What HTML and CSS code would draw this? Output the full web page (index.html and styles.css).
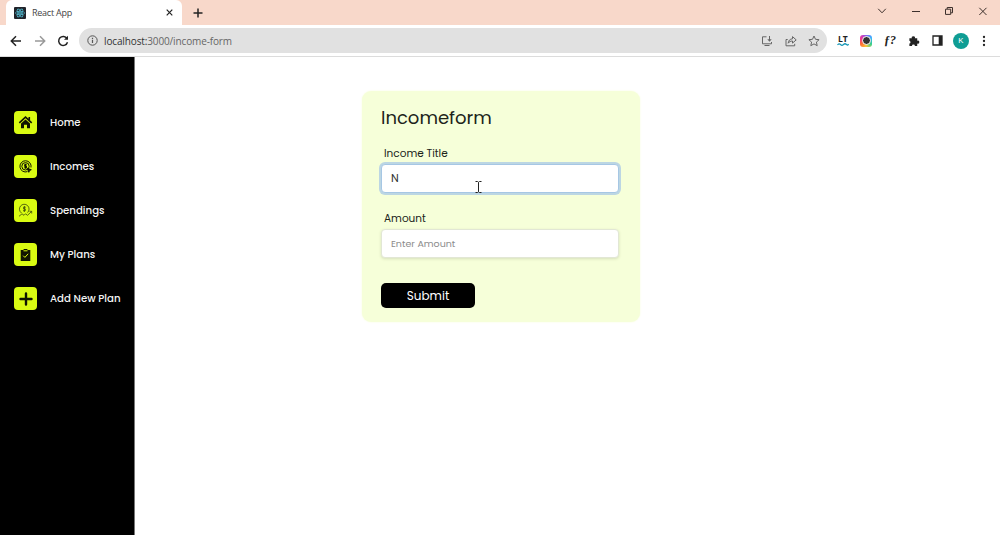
FILE: index.html
```html
<!DOCTYPE html>
<html lang="en">
<head>
  <meta charset="UTF-8">
  <title>React App</title>
  <link rel="stylesheet" href="styles.css">
</head>
<body>
  <div class="tabstrip">
    <div class="tab">
      <svg class="favicon" width="12" height="12" viewBox="0 0 12 12">
        <rect width="12" height="12" rx="1" fill="#20232a"/>
        <g fill="none" stroke="#4fb3c8" stroke-width=".8">
          <ellipse cx="6" cy="6" rx="4.6" ry="1.8"/>
          <ellipse cx="6" cy="6" rx="4.6" ry="1.8" transform="rotate(60 6 6)"/>
          <ellipse cx="6" cy="6" rx="4.6" ry="1.8" transform="rotate(120 6 6)"/>
        </g>
        <circle cx="6" cy="6" r=".9" fill="#4fb3c8"/>
      </svg>
      <span class="tab-title">React App</span>
      <svg width="7" height="7" viewBox="0 0 7 7" stroke="#222" stroke-width="1.2"><path d="M.7.7l5.6 5.6M6.3.7L.7 6.3"/></svg>
    </div>
    <svg class="new-tab" width="10" height="10" viewBox="0 0 10 10" stroke="#222" stroke-width="1.5"><path d="M5 .5v9M.5 5h9"/></svg>
    <div class="window-buttons">
      <svg width="10" height="10" viewBox="0 0 10 10"><path d="M1.2 2.8L5 6.8l3.8-4"/></svg>
      <svg width="10" height="10" viewBox="0 0 10 10"><path d="M1 5.5h8"/></svg>
      <svg width="10" height="10" viewBox="0 0 10 10"><path d="M1.5 3.2h5.2v5.2H1.5zM3.2 3V1.5h5.3v5.3H7"/></svg>
      <svg width="10" height="10" viewBox="0 0 10 10"><path d="M1.3 1.8l7.2 7.2M8.5 1.8L1.3 9"/></svg>
    </div>
  </div>

  <div class="toolbar">
    <div class="nav-buttons">
      <svg width="12" height="12" viewBox="0 0 12 12" stroke="#222"><path d="M11 6H1.5M6 1.3L1.3 6 6 10.7"/></svg>
      <svg width="12" height="12" viewBox="0 0 12 12" stroke="#999"><path d="M1 6h9.5M6 1.3L10.7 6 6 10.7"/></svg>
      <svg width="12" height="12" viewBox="0 0 12 12" stroke="#222"><path d="M10 3.5A4.5 4.5 0 1 0 10.5 7.2"/><path d="M11 .8v4H7z" fill="#222" stroke="none"/></svg>
    </div>
    <div class="address">
      <svg width="11" height="11" viewBox="0 0 11 11" fill="none" stroke="#555"><circle cx="5.5" cy="5.5" r="4.7"/><path d="M5.5 4.8v3.3M5.5 2.7v1.2" stroke-width="1.2"/></svg>
      <span class="url"><span class="host">localhost:</span>3000/income-form</span>
      <div class="address-actions">
        <svg width="12" height="12" viewBox="0 0 12 12"><path d="M5.5 1.8H1.5v7h9V7M3.5 10.5h5M8.5 1v4.5"/><path d="M6.3 4.3h4.4L8.5 6.8z" fill="#666" stroke="none"/></svg>
        <svg width="12" height="12" viewBox="0 0 12 12"><path d="M2.700 4.500H1v6.300h8.700V8.800M3.200 8.200C3.500 5.300 5 4 7.500 3.800V1.600l3.700 3.300-3.700 3.200V6C5.500 6 4.200 6.700 3.200 8.200z"/></svg>
        <svg width="12" height="12" viewBox="0 0 12 12"><path d="M6 1l1.500 3.300 3.600.4-2.700 2.400.8 3.600L6 8.900l-3.200 1.800.8-3.600L.9 4.700l3.600-.4z"/></svg>
      </div>
    </div>
    <div class="extensions">
      <div class="ext"><span class="ext-lt">LT<svg width="12" height="3" viewBox="0 0 12 3"><path d="M.5 2Q2 0 3.500 1.500T6.500 1.500T9.500 1.500T11.500 1" fill="none" stroke="#1696b5" stroke-width="1.200"/></svg></span></div>
      <div class="ext"><span class="ext-color"><i></i></span></div>
      <div class="ext"><span class="ext-font">ƒ?</span></div>
      <div class="ext"><svg width="12" height="12" viewBox="0 0 13 13" fill="#222"><path d="M1.500 3.500h2.700a1.700 1.700 0 1 1 3.200 0H10v2.600a1.700 1.700 0 1 1 0 3.200V12H7.500a1.600 1.600 0 0 0-3.200 0H1.500V9.300a1.600 1.600 0 0 0 0-3.100z"/></svg></div>
      <div class="ext"><svg width="11" height="11" viewBox="0 0 11 11"><path d="M1 1h9v9H1z" fill="none" stroke="#222" stroke-width="1.300"/><path d="M6.700 1H10v9H6.700z" fill="#222"/></svg></div>
      <div class="ext"><span class="avatar">K</span></div>
      <div class="ext"><svg width="4" height="12" viewBox="0 0 4 12" fill="#222"><circle cx="2" cy="2" r="1.150"/><circle cx="2" cy="6" r="1.150"/><circle cx="2" cy="10" r="1.150"/></svg></div>
    </div>
  </div>

  <div class="page">
    <nav class="sidebar">
      <a class="side-link">
        <span class="side-icon"><svg width="15" height="15" viewBox="0 0 15 15"><path d="M1.300 7.800l6.200-5.600 6.200 5.600M11.300 2v3" fill="none" stroke="#101500" stroke-width="1.600"/><path d="M3 8.600l4.500-4L12 8.600V13.300H9V9.800H6v3.500H3z" fill="#101500"/></svg></span>
        <span>Home</span>
      </a>
      <a class="side-link">
        <span class="side-icon"><svg width="15" height="15" viewBox="0 0 15 15" fill="none" stroke="#101500"><path d="M9.500 12.600A5.600 5.600 0 1 1 13 8.500"/><circle cx="7.500" cy="7.300" r="3.700"/><path d="M8.800 5.800H6.700v1.400h1.700v1.600H6.200M7.500 4.800v5" stroke-width="1.100"/><path d="M9.300 9.300l4 1.400-1.700.8-.8 1.800z" fill="#101500"/></svg></span>
        <span>Incomes</span>
      </a>
      <a class="side-link">
        <span class="side-icon"><svg width="15" height="15" viewBox="0 0 15 15" fill="none" stroke="#39470a" stroke-width=".8"><path d="M3.500 10A4.800 4.800 0 1 1 9.500 9.600"/><path d="M7.800 4.200H5.600v1.700h1.700v1.800H5M6.400 3v6"/><path d="M1 13.300l3-2.500 2 1.500 1.500-1.500 2 1.500L13.500 8.500M11.500 8.300h2.200v2.200"/></svg></span>
        <span>Spendings</span>
      </a>
      <a class="side-link">
        <span class="side-icon"><svg width="13" height="14" viewBox="0 0 13 14"><path d="M1.700 2h2.500l.8-1h3l.8 1h2.500v11H1.700z" fill="#101500"/><path d="M4.500 2.800h4M4.200 7.700l1.700 1.700 3.200-3.600" fill="none" stroke="#d9fb12" stroke-width="1"/></svg></span>
        <span>My Plans</span>
      </a>
      <a class="side-link">
        <span class="side-icon"><svg width="14" height="14" viewBox="0 0 14 14"><path d="M7 1.500v11M1.500 7h11" stroke="#101500" stroke-width="2.400" stroke-linecap="round"/></svg></span>
        <span>Add New Plan</span>
      </a>
    </nav>

    <main class="content">
      <form class="income-form">
        <h2>Incomeform</h2>
        <label for="title">Income Title</label>
        <input class="field focused" id="title" type="text" value="N">
        <label class="amount-label" for="amount">Amount</label>
        <input class="field" id="amount" type="text" placeholder="Enter Amount">
        <button class="submit" type="button">Submit</button>
      </form>
      <svg class="cursor" width="7" height="12" viewBox="0 0 7 12"><path d="M.5.5h2l1 .8 1-.8h2M3.500 1.300v9.400M.5 11.500h2l1-.8 1 .8h2" fill="none" stroke="#222"/></svg>
    </main>
  </div>
</body>
</html>
```

FILE: styles.css
```css
* { box-sizing: border-box; }
body {
  margin: 0;
  height: 535px;
  overflow: hidden;
  display: flex;
  flex-direction: column;
  font-family: Poppins, Inter, sans-serif;
  background: #fff;
}
svg { display: block; flex: none; }

/* browser bar */
.tabstrip {
  display: flex;
  align-items: center;
  height: 25px;
  padding-left: 6px;
  background: #f8d8ca;
}
.tab {
  display: flex;
  align-items: center;
  width: 176px;
  height: 25px;
  padding: 0 9px 0 8px;
  background: #fff;
  border-radius: 6px 6px 0 0;
}
.tab-title {
  flex: 1;
  margin-left: 6px;
  font: 9px "Open Sans", sans-serif;
  letter-spacing: -.25px;
  color: #444;
}
.new-tab { margin-left: 11px; }
.window-buttons {
  display: flex;
  gap: 23.7px;
  margin-left: auto;
  margin-right: 12px;
  margin-bottom: 4px;
  fill: none;
  stroke: #3d302c;
}
.toolbar {
  display: flex;
  align-items: center;
  height: 32px;
  padding: 0 4px 0 10px;
  border-bottom: 1px solid #dcdcdc;
}
.nav-buttons {
  display: flex;
  gap: 11.5px;
  fill: none;
  stroke-width: 1.5;
}
.address {
  display: flex;
  align-items: center;
  width: 748px;
  height: 25px;
  margin-left: 10px;
  padding: 0 7px 0 8px;
  background: #e1e1e1;
  border-radius: 13px;
}
.url {
  margin-left: 6px;
  font: 10px "Open Sans", sans-serif;
  letter-spacing: -.13px;
  color: #666;
}
.host { color: #333; }
.address-actions {
  display: flex;
  gap: 11.5px;
  margin-left: auto;
  fill: none;
  stroke: #666;
}
.extensions {
  display: flex;
  flex: 1;
  margin-left: 4px;
}
.ext {
  display: flex;
  flex: 1 1 0;
  align-items: center;
  justify-content: center;
  height: 18px;
  min-width: 0;
}
.ext-lt {
  width: 12px;
  font: bold 8.5px/8px "Open Sans", sans-serif;
  text-align: center;
  color: #222;
}
.ext-color {
  display: flex;
  align-items: center;
  justify-content: center;
  width: 12px;
  height: 12px;
  border-radius: 3px;
  background: conic-gradient(#8a5cf0, #38b6ff, #35cf8a, #ffc738, #ff6b35, #f0359a, #8a5cf0);
}
.ext-color i {
  width: 9px;
  height: 9px;
  border: 1px solid #fff;
  border-radius: 50%;
  background: #333;
}
.ext-font {
  font: italic bold 12px "Liberation Serif", serif;
  color: #222;
}
.avatar {
  width: 16px;
  height: 16px;
  border-radius: 50%;
  background: #0f9d94;
  color: #fff;
  font: 8px/16px Roboto, sans-serif;
  text-align: center;
}

/* app */
.page {
  display: flex;
  flex: 1;
}
.sidebar {
  display: flex;
  flex-direction: column;
  gap: 21px;
  width: 135px;
  padding: 54px 0 0 14px;
  background: #000;
  border-right: 1px solid #777;
}
.side-link {
  display: flex;
  align-items: center;
  gap: 13px;
  height: 23px;
  font-size: 10.2px;
  font-weight: 500;
  white-space: nowrap;
  color: #f4f4f4;
}
.side-icon {
  display: flex;
  align-items: center;
  justify-content: center;
  width: 23px;
  height: 23px;
  border-radius: 4px;
  background: #d9fb12;
}
.content {
  position: relative;
  flex: 1;
  padding: 34px 0 0 227px;
}
.income-form {
  display: flex;
  flex-direction: column;
  width: 278px;
  height: 231px;
  padding: 14px 21px 0 19px;
  border-radius: 9px;
  background: #f6ffd9;
  box-shadow: 0 0 2px #f6ffd9;
}
.income-form h2 {
  margin: 0 0 15px;
  font-size: 18px;
  font-weight: 400;
  line-height: 26px;
  color: #20241a;
}
.income-form label {
  margin-left: 3px;
  font-size: 10.5px;
  line-height: 15px;
  color: #20241a;
}
.field {
  height: 29px;
  margin: 3px 0 0;
  padding: 0 9px;
  border: 1px solid #e2e7d5;
  border-radius: 4px;
  outline: 0;
  background: #fff;
  box-shadow: 0 1px 3px rgba(90, 100, 70, .2);
  font: 9.5px Poppins, Inter, sans-serif;
  color: #333;
}
.field::placeholder { color: #8c8c8c; }
.field.focused {
  border-color: #a6c7e4;
  box-shadow: 0 0 0 2px #bcd6e3;
  font-size: 11px;
}
.income-form .amount-label { margin-top: 18px; }
.submit {
  width: 94px;
  height: 25px;
  margin-top: 25px;
  padding: 0;
  border: 0;
  border-radius: 5px;
  background: #000;
  color: #fff;
  font: 12px Poppins, Inter, sans-serif;
}
.cursor {
  position: absolute;
  left: 340px;
  top: 124px;
}
```
